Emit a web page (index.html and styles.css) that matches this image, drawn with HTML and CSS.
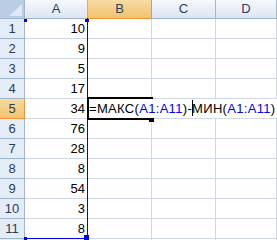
FILE: index.html
```html
<!DOCTYPE html>
<html>
<head>
<meta charset="utf-8">
<link rel="stylesheet" href="styles.css">
</head>
<body>
<div class="sheet">
  <div class="grid">
    <div class="cell corner"><svg class="tri" width="24" height="18" viewBox="0 0 24 18"><polygon points="9,16 22,16 22,4" fill="#dfe8f4"/></svg></div>
    <div class="cell colh">A</div>
    <div class="cell colh sel">B</div>
    <div class="cell colh">C</div>
    <div class="cell colh">D</div>

    <div class="cell rowh">1</div><div class="cell num">10</div><div class="cell"></div><div class="cell"></div><div class="cell"></div>
    <div class="cell rowh">2</div><div class="cell num">9</div><div class="cell"></div><div class="cell"></div><div class="cell"></div>
    <div class="cell rowh">3</div><div class="cell num">5</div><div class="cell"></div><div class="cell"></div><div class="cell"></div>
    <div class="cell rowh">4</div><div class="cell num">17</div><div class="cell"></div><div class="cell"></div><div class="cell"></div>
    <div class="cell rowh sel">5</div><div class="cell num">34</div><div class="cell"></div><div class="cell"></div><div class="cell"></div>
    <div class="cell rowh">6</div><div class="cell num">76</div><div class="cell"></div><div class="cell"></div><div class="cell"></div>
    <div class="cell rowh">7</div><div class="cell num">28</div><div class="cell"></div><div class="cell"></div><div class="cell"></div>
    <div class="cell rowh">8</div><div class="cell num">8</div><div class="cell"></div><div class="cell"></div><div class="cell"></div>
    <div class="cell rowh">9</div><div class="cell num">54</div><div class="cell"></div><div class="cell"></div><div class="cell"></div>
    <div class="cell rowh">10</div><div class="cell num">3</div><div class="cell"></div><div class="cell"></div><div class="cell"></div>
    <div class="cell rowh">11</div><div class="cell num">8</div><div class="cell"></div><div class="cell"></div><div class="cell"></div>
    <div class="cell rowh"></div><div class="cell"></div><div class="cell"></div><div class="cell"></div><div class="cell"></div>
  </div>

  <div class="range"></div>
  <div class="handle h-tl"></div>
  <div class="handle h-tr"></div>
  <div class="handle h-bl"></div>
  <div class="handle h-br"></div>

  <div class="active"></div>
  <div class="fill"></div>
  <div class="editor">=МАКС(<span class="ref">A1:A11</span>)-<span class="caret"></span>МИН(<span class="ref">A1:A11</span>)</div>
</div>
</body>
</html>
```

FILE: styles.css
```css
body {
  margin: 0;
  background: #fff;
  font-family: "Liberation Sans", Arial, sans-serif;
  font-size: 13px;
  overflow: hidden;
}

.sheet {
  position: relative;
  width: 277px;
  height: 240px;
  overflow: hidden;
}

.grid {
  display: grid;
  grid-template-columns: 25px 63px 64px 64px 61px;
  grid-template-rows: 19px repeat(12, 20px);
}

.cell {
  box-sizing: border-box;
  border-right: 1px solid #d0d7e5;
  border-bottom: 1px solid #d0d7e5;
  line-height: 19px;
  color: #000;
  white-space: nowrap;
}

.num {
  text-align: right;
  padding-right: 2px;
}

.corner {
  position: relative;
  background: #b9cde6;
  border-right-color: #9eb6ce;
  border-bottom-color: #9eb6ce;
}

.tri {
  display: block;
}

.colh {
  background: linear-gradient(#f6f9fc, #dde5f0);
  border-right-color: #9eb6ce;
  border-bottom-color: #9eb6ce;
  text-align: center;
  line-height: 18px;
  color: #27415f;
}

.colh.sel {
  background: linear-gradient(#f9dba5, #f1c36a);
  border-right-color: #f29536;
  border-bottom-color: #f29536;
}

.rowh {
  background: #e4ecf7;
  border-right-color: #9eb6ce;
  border-bottom-color: #9eb6ce;
  text-align: center;
  color: #2a3d56;
}

.rowh.sel {
  background: linear-gradient(#f9d9a0, #f3c46c);
  border-right-color: #f29536;
  border-bottom-color: #f29536;
}

.range {
  position: absolute;
  left: 24px;
  top: 18px;
  width: 64px;
  height: 221px;
  box-sizing: border-box;
  border-right: 1px solid #0000ff;
  border-bottom: 1px solid #0000ff;
}

.handle {
  position: absolute;
  background: #0000ff;
}

.h-tl { left: 24px; top: 19px; width: 3px; height: 3px; }
.h-tr { left: 85px; top: 19px; width: 4px; height: 3px; }
.h-bl { left: 24px; top: 237px; width: 3px; height: 3px; }
.h-br { left: 84px; top: 235px; width: 5px; height: 5px; }

.active {
  position: absolute;
  left: 87px;
  top: 97px;
  width: 66px;
  height: 23px;
  box-sizing: border-box;
  border: 2px solid #000;
  border-right: none;
}

.fill {
  position: absolute;
  left: 149px;
  top: 118px;
  width: 5px;
  height: 4px;
  background: #000;
}

.editor {
  position: absolute;
  left: 89px;
  top: 99px;
  width: 188px;
  height: 19px;
  background: #fff;
  line-height: 19px;
  white-space: nowrap;
  color: #000;
  letter-spacing: 0.32px;
}

.ref {
  color: #0000ff;
}

.caret {
  display: inline-block;
  width: 1px;
  height: 16px;
  margin-right: -1px;
  background: #000;
  vertical-align: -3px;
}
```
